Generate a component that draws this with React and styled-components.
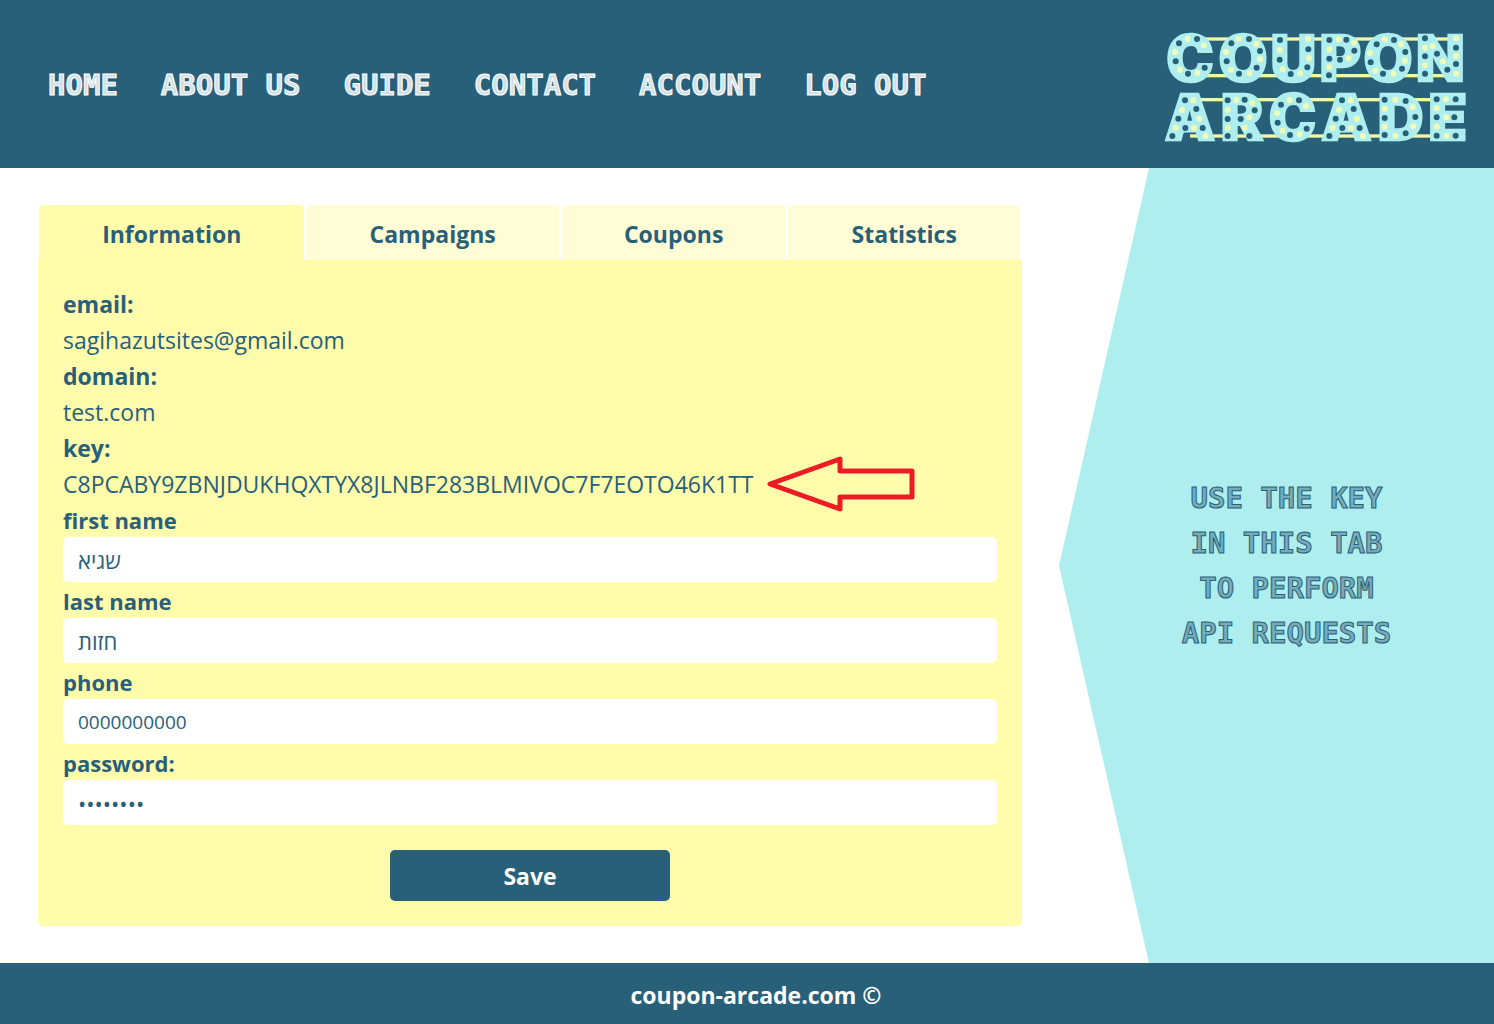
import React from "react";
import styled, { createGlobalStyle } from "styled-components";

const blue = "#28607a";
const aqua = "#afeeee";
const yellow = "#fffcac";
const paleYellow = "#fffdd6";

const GlobalStyle = createGlobalStyle`
  * { box-sizing: border-box; }
  body {
    margin: 0;
    background: #fff;
    color: ${blue};
    font-family: "Open Sans", "Noto Sans", "DejaVu Sans", sans-serif;
    font-size: 23px;
    line-height: 34px;
  }
`;

const Page = styled.div`
  min-height: 100vh;
  display: flex;
  flex-direction: column;
`;

const Header = styled.header`
  display: flex;
  align-items: center;
  justify-content: space-between;
  padding: 24px 30px 24px 48px;
  background: ${blue};
`;

const Nav = styled.nav`
  display: flex;
  flex-wrap: wrap;
  gap: 0 43px;
`;

const NavLink = styled.a`
  padding-top: 2px;
  color: #d3e1e6;
  font: bold 29px/45px "DejaVu Sans Mono", monospace;
  -webkit-text-stroke: 1px #fff;
  text-decoration: none;
  text-transform: uppercase;
`;

const LogoLink = styled.a`
  display: block;
  flex: none;
  svg { display: block; overflow: visible; }
`;

const Main = styled.main`
  flex: 1;
  display: flex;
`;

const Content = styled.section`
  flex: 1;
  min-width: 0;
  display: flex;
  flex-direction: column;
  padding: 37px 37px 37px 38px;
`;

const Tabs = styled.div`
  display: flex;
  gap: 2px;
  padding: 0 2px 0 1px;
`;

const Tab = styled.button`
  flex: 1 1 auto;
  height: 55px;
  padding: 2px 0 0;
  border: 0;
  border-radius: 5px 5px 0 0;
  background: ${(p) => (p.$active ? yellow : paleYellow)};
  color: ${blue};
  font: inherit;
  font-weight: 700;
  cursor: pointer;
`;

const Panel = styled.form`
  display: flex;
  flex-direction: column;
  padding: 25px;
  background: ${yellow};
  border-radius: 0 0 5px 5px;
`;

const Details = styled.dl`
  margin: 0;
  dt, dd { padding-top: 2px; }
  dt { font-weight: 700; }
  dd { margin: 0; }
`;

const KeyValue = styled.span`
  position: relative;
  display: inline-block;
  vertical-align: top;
`;

const Arrow = styled.svg`
  position: absolute;
  top: -11px;
  left: 100%;
  margin-left: 12px;
`;

const Label = styled.label`
  padding-top: 2px;
  font-size: 22px;
  font-weight: 700;
`;

const Input = styled.input`
  width: 100%;
  height: 45px;
  padding: 0 15px;
  border: 0;
  border-radius: 5px;
  background: #fff;
  color: ${blue};
  font: inherit;
  font-size: ${(p) => (p.type === "tel" ? "19px" : "22px")};
`;

const SaveButton = styled.button`
  align-self: center;
  width: 30%;
  height: 51px;
  margin-top: 25px;
  padding: 0;
  border: 0;
  border-radius: 5px;
  background: ${blue};
  color: #fff;
  font: inherit;
  font-weight: 700;
  cursor: pointer;
`;

const Side = styled.aside`
  flex: none;
  width: 435px;
  display: flex;
  align-items: center;
  justify-content: center;
  padding-left: 20px;
  background: ${aqua};
  clip-path: polygon(90px 0, 100% 0, 100% 100%, 90px 100%, 0 50%);
`;

const SideText = styled.p`
  width: 220px;
  margin: 0;
  color: #76abb9;
  font: bold 29px/45px "DejaVu Sans Mono", monospace;
  -webkit-text-stroke: 1px ${blue};
  text-align: center;
  text-transform: uppercase;
`;

const Footer = styled.footer`
  display: flex;
  align-items: center;
  justify-content: center;
  height: 61px;
  padding: 2px 30px 0 48px;
  background: ${blue};
  color: #fff;
  font-weight: 700;
`;

const letters = [
  ["C", 120, 182], ["O", 279, 182], ["U", 430, 182], ["P", 571, 182], ["O", 714, 182], ["N", 871, 182],
  ["A", 120, 359], ["R", 276, 359], ["C", 427, 359], ["A", 589, 359], ["D", 752, 359], ["E", 893, 359],
];

const darkBulbs = [
  [141, 57], [87, 70], [77, 124], [114, 161], [164, 143],
  [297, 57], [244, 70], [330, 93], [230, 124], [320, 143], [267, 161],
  [390, 60], [475, 88], [389, 119], [422, 162], [472, 142],
  [538, 60], [589, 59], [613, 92], [538, 116], [570, 119], [537, 166],
  [732, 60], [680, 73], [766, 96], [662, 127], [756, 146], [699, 161],
  [825, 55], [861, 101], [918, 83], [825, 109], [918, 132], [892, 149], [825, 161],
  [105, 241], [139, 267], [85, 296], [106, 324], [158, 324], [67, 348],
  [233, 241], [284, 239], [314, 271], [233, 297], [272, 297], [233, 348], [298, 348],
  [447, 241], [393, 254], [383, 308], [470, 326], [420, 345],
  [576, 241], [611, 267], [557, 296], [577, 324], [629, 324], [538, 348],
  [704, 239], [767, 243], [796, 291], [704, 294], [704, 345], [767, 340],
  [860, 238], [917, 238], [860, 292], [913, 292], [860, 347], [917, 347],
];

const lightBulbs = [
  [113, 56], [161, 76], [75, 96], [90, 149], [142, 158],
  [266, 56], [319, 72], [228, 96], [330, 118], [243, 149], [298, 159],
  [474, 56], [389, 90], [477, 115], [398, 148], [450, 160],
  [566, 58], [612, 68], [538, 88], [596, 115], [538, 141],
  [704, 58], [753, 73], [660, 99], [765, 122], [676, 152], [730, 161],
  [918, 55], [825, 83], [848, 79], [879, 124], [918, 108], [825, 136], [918, 161],
  [130, 241], [96, 270], [148, 296], [77, 323], [132, 324], [167, 348],
  [259, 240], [307, 249], [233, 270], [298, 292], [233, 323], [284, 323],
  [419, 240], [468, 259], [381, 280], [398, 332], [449, 343],
  [602, 241], [567, 270], [620, 296], [548, 323], [603, 324], [639, 348],
  [736, 239], [788, 262], [704, 267], [704, 320], [790, 319], [736, 347],
  [887, 238], [860, 265], [889, 292], [860, 320], [890, 347],
];

function Logo() {
  return (
    <svg width="300" height="120" viewBox="42 12 900 360" role="img" aria-label="Coupon Arcade">
      {[52, 162, 234, 343].map((y) => (
        <rect key={y} x="120" y={y} width="780" height="10" fill="#f4f7a6" />
      ))}
      <g
        fill={aqua}
        stroke={aqua}
        strokeWidth="8"
        fontFamily="Inter, sans-serif"
        fontWeight="900"
        fontSize="188"
        textAnchor="middle"
      >
        {letters.map(([letter, x, y]) => (
          <text key={x + "-" + y} x={x} y={y}>{letter}</text>
        ))}
      </g>
      {darkBulbs.map(([x, y]) => <circle key={x + "-" + y} cx={x} cy={y} r="9" fill={blue} />)}
      {lightBulbs.map(([x, y]) => <circle key={x + "-" + y} cx={x} cy={y} r="9" fill="#f1fbb8" />)}
    </svg>
  );
}

const fields = [
  { id: "first", label: "first name", type: "text", value: "שגיא" },
  { id: "last", label: "last name", type: "text", value: "חזות" },
  { id: "phone", label: "phone", type: "tel", value: "0000000000" },
  { id: "password", label: "password:", type: "password", value: "12345678" },
];

export default function App() {
  return (
    <Page>
      <GlobalStyle />
      <Header>
        <Nav>
          {["Home", "About us", "Guide", "Contact", "Account", "Log out"].map((item) => (
            <NavLink key={item} href="#">{item}</NavLink>
          ))}
        </Nav>
        <LogoLink href="#"><Logo /></LogoLink>
      </Header>
      <Main>
        <Content>
          <Tabs role="tablist">
            {["Information", "Campaigns", "Coupons", "Statistics"].map((tab, i) => (
              <Tab key={tab} type="button" role="tab" aria-selected={i === 0} $active={i === 0}>{tab}</Tab>
            ))}
          </Tabs>
          <Panel onSubmit={(e) => e.preventDefault()}>
            <Details>
              <dt>email:</dt>
              <dd>sagihazutsites@gmail.com</dd>
              <dt>domain:</dt>
              <dd>test.com</dd>
              <dt>key:</dt>
              <dd>
                <KeyValue>
                  C8PCABY9ZBNJDUKHQXTYX8JLNBF283BLMIVOC7F7EOTO46K1TT
                  <Arrow width="150" height="56" viewBox="0 0 150 56" fill="none" stroke="#ec1c24" strokeWidth="5" aria-hidden="true">
                    <path d="M4 28 L74 3 V15 H146 V41 H74 V53 Z" strokeLinejoin="round" />
                  </Arrow>
                </KeyValue>
              </dd>
            </Details>
            {fields.map((f) => (
              <React.Fragment key={f.id}>
                <Label htmlFor={f.id}>{f.label}</Label>
                <Input id={f.id} type={f.type} defaultValue={f.value} />
              </React.Fragment>
            ))}
            <SaveButton type="submit">Save</SaveButton>
          </Panel>
        </Content>
        <Side>
          <SideText>Use the key in this tab to perform API requests</SideText>
        </Side>
      </Main>
      <Footer>coupon-arcade.com ©</Footer>
    </Page>
  );
}
